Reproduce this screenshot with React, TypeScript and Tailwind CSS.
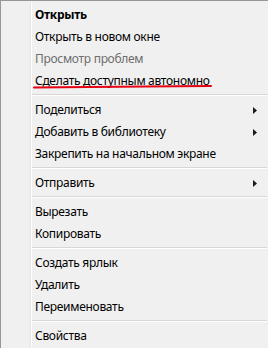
import React from "react";

type Item =
    | { kind: "item"; label: string; bold?: boolean; disabled?: boolean; submenu?: boolean; mark?: boolean }
    | { kind: "sep" };

const items: Item[] = [
    { kind: "item", label: "Открыть", bold: true },
    { kind: "item", label: "Открыть в новом окне" },
    { kind: "item", label: "Просмотр проблем", disabled: true },
    { kind: "item", label: "Сделать доступным автономно", mark: true },
    { kind: "sep" },
    { kind: "item", label: "Поделиться", submenu: true },
    { kind: "item", label: "Добавить в библиотеку", submenu: true },
    { kind: "item", label: "Закрепить на начальном экране" },
    { kind: "sep" },
    { kind: "item", label: "Отправить", submenu: true },
    { kind: "sep" },
    { kind: "item", label: "Вырезать" },
    { kind: "item", label: "Копировать" },
    { kind: "sep" },
    { kind: "item", label: "Создать ярлык" },
    { kind: "item", label: "Удалить" },
    { kind: "item", label: "Переименовать" },
    { kind: "sep" },
    { kind: "item", label: "Свойства" },
];

const Arrow = () => (
    <svg width="4" height="7" viewBox="0 0 4 7" className="absolute right-[11px] top-[8px]">
        <path d="M0 0 L4 3.5 L0 7 Z" fill="#1a1a1a" />
    </svg>
);

export default function App() {
    return (
        <div
            className="w-[268px] h-[348px] bg-[#f0f0f0] border-t border-l border-[#979797] relative overflow-hidden text-[12px] tracking-[-0.3px] text-black"
            style={{ fontFamily: '"Segoe UI", "Noto Sans", "Open Sans", sans-serif' }}
        >
            {/* gutter line */}
            <div className="absolute left-[29px] top-[1px] bottom-[2px] w-[2px] flex">
                <div className="w-px bg-[#e2e3e3]" />
                <div className="w-px bg-white" />
            </div>

            <div className="pt-[3px] flex flex-col">
                {items.map((it, i) =>
                    it.kind === "sep" ? (
                        <div key={i} className="h-[7px] pt-[2px] pl-[30px] pr-[1px]">
                            <div className="h-px bg-[#d7d7d7]" />
                            <div className="h-px bg-white" />
                        </div>
                    ) : (
                        <div
                            key={i}
                            className={`relative h-[22px] flex items-center pl-[34px] leading-none ${
                                it.bold ? "font-bold" : ""
                            } ${it.disabled ? "text-[#6d6d6d]" : ""}`}
                        >
                            {it.label}
                            {it.submenu && <Arrow />}
                            {it.mark && (
                                <svg
                                    width="180"
                                    height="6"
                                    viewBox="0 0 180 6"
                                    className="absolute left-[32px] top-[14px]"
                                >
                                    <path
                                        d="M1 3.5 C 40 3.2, 120 2.6, 178 2"
                                        stroke="#e60012"
                                        strokeWidth="2"
                                        fill="none"
                                        strokeLinecap="round"
                                    />
                                </svg>
                            )}
                        </div>
                    )
                )}
            </div>
        </div>
    );
}
